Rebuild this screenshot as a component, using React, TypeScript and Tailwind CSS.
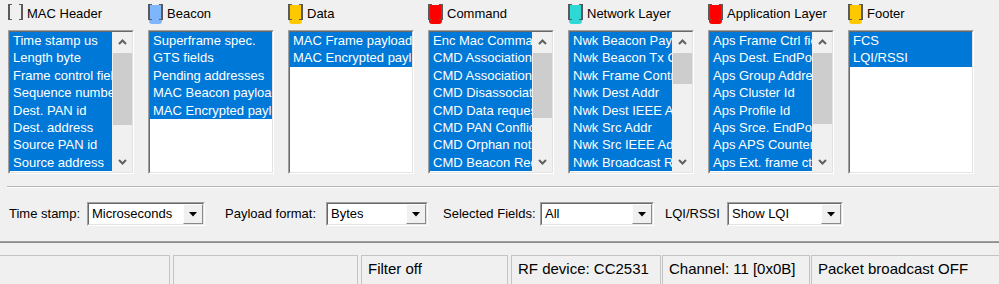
import React from 'react';

interface Group {
  name: string;
  swatch: string;
  items: string[];
  thumb?: string;
}

const groups: Group[] = [
  {
    name: 'MAC Header',
    swatch: '',
    items: ['Time stamp us', 'Length byte', 'Frame control field', 'Sequence number', 'Dest. PAN id', 'Dest. address', 'Source PAN id', 'Source address'],
    thumb: 'h-[72px]',
  },
  {
    name: 'Beacon',
    swatch: 'bg-[#7fb5fb]',
    items: ['Superframe spec.', 'GTS fields', 'Pending addresses', 'MAC Beacon payload', 'MAC Encrypted payload'],
  },
  {
    name: 'Data',
    swatch: 'bg-[#fdc800]',
    items: ['MAC Frame payload', 'MAC Encrypted payload'],
  },
  {
    name: 'Command',
    swatch: 'bg-[#ff0000]',
    items: ['Enc Mac Command', 'CMD Association request', 'CMD Association response', 'CMD Disassociation notification', 'CMD Data request', 'CMD PAN Conflict', 'CMD Orphan notification', 'CMD Beacon Request'],
    thumb: 'h-[65px]',
  },
  {
    name: 'Network Layer',
    swatch: 'bg-[#2ed8d4]',
    items: ['Nwk Beacon Payload', 'Nwk Beacon Tx Offset', 'Nwk Frame Control', 'Nwk Dest Addr', 'Nwk Dest IEEE Addr', 'Nwk Src Addr', 'Nwk Src IEEE Addr', 'Nwk Broadcast Radius'],
    thumb: 'h-[31px]',
  },
  {
    name: 'Application Layer',
    swatch: 'bg-[#ff0000]',
    items: ['Aps Frame Ctrl field', 'Aps Dest. EndPoint', 'Aps Group Address', 'Aps Cluster Id', 'Aps Profile Id', 'Aps Srce. EndPoint', 'Aps APS Counter', 'Aps Ext. frame ctrl'],
    thumb: 'h-[71px]',
  },
  {
    name: 'Footer',
    swatch: 'bg-[#fdc800]',
    items: ['FCS', 'LQI/RSSI'],
  },
];

function Swatch({ color }: { color: string }) {
  return (
    <div className="relative w-[15px] h-[20px] shrink-0">
      {color && <div className={`absolute left-[1px] top-[1px] w-[13px] h-[19px] rounded-b-[3px] ${color}`} />}
      <div className="absolute left-0 top-0 w-[4px] h-[16px] border-l-2 border-t border-b border-[#5a5a5a]" />
      <div className="absolute right-0 top-0 w-[4px] h-[16px] border-r-2 border-t border-b border-[#5a5a5a]" />
    </div>
  );
}

function Chevron({ down }: { down?: boolean }) {
  return (
    <svg width="9" height="6" viewBox="0 0 9 6">
      <path d={down ? 'M1 1 L4.5 4.5 L8 1' : 'M1 5 L4.5 1.5 L8 5'} fill="none" stroke="#606060" strokeWidth="2" />
    </svg>
  );
}

function ListBox({ group }: { group: Group }) {
  return (
    <div className="w-[126px]">
      <div className="flex items-start h-[20px] gap-[4px]">
        <Swatch color={group.swatch} />
        <span className="text-[13px] leading-[20px] text-black whitespace-nowrap">{group.name}</span>
      </div>
      <div className="mt-[6px] h-[144px] border border-t-[#a0a0a0] border-l-[#a0a0a0] border-r-white border-b-white">
        <div className="h-full border border-t-[#696969] border-l-[#696969] border-r-[#e3e3e3] border-b-[#e3e3e3] bg-white flex">
          <div className="flex-1 overflow-hidden">
            {group.items.map((it) => (
              <div key={it} className="h-[17.4px] leading-[17.4px] bg-[#0078d7] text-white text-[13px] px-[3px] whitespace-nowrap overflow-hidden">
                {it}
              </div>
            ))}
          </div>
          {group.thumb && (
            <div className="w-[20px] bg-[#f0f0f0] flex flex-col">
              <div className="h-[20px] flex items-center justify-center"><Chevron /></div>
              <div className={`mt-[1px] ml-[1px] bg-[#cdcdcd] ${group.thumb}`} />
              <div className="flex-1" />
              <div className="h-[20px] flex items-center justify-center"><Chevron down /></div>
            </div>
          )}
        </div>
      </div>
    </div>
  );
}

function Combo({ value, width }: { value: string; width: string }) {
  return (
    <div className={`h-[24px] border border-t-[#a0a0a0] border-l-[#a0a0a0] border-r-white border-b-white ${width}`}>
      <div className="h-full border border-t-[#696969] border-l-[#696969] border-r-[#e3e3e3] border-b-[#e3e3e3] bg-white flex">
        <span className="flex-1 pl-[3px] text-[13px] leading-[20px] text-black whitespace-nowrap overflow-hidden">{value}</span>
        <div className="w-[20px] h-full bg-[#f0f0f0] border border-t-[#fdfdfd] border-l-[#fdfdfd] border-r-[#8a8a8a] border-b-[#8a8a8a] flex items-center justify-center">
          <svg width="8" height="5" viewBox="0 0 8 5"><path d="M0 0 H8 L4 4.5 Z" fill="#000" /></svg>
        </div>
      </div>
    </div>
  );
}

export default function App() {
  return (
    <div className="w-[999px] h-[284px] bg-[#f0f0f0] overflow-hidden font-['Liberation_Sans',Arial,sans-serif]">
      <div className="flex gap-[14px] pl-[8px] pt-[4px]">
        {groups.map((g) => (
          <ListBox key={g.name} group={g} />
        ))}
      </div>

      <div className="ml-[7px] mt-[12px] h-[2px] border-t border-t-[#b4b4b4] border-b border-b-white" />

      <div className="mt-[14px] h-[24px] flex items-center text-[13px] text-black">
        <span className="ml-[9px] w-[78px]">Time stamp:</span>
        <Combo value="Microseconds" width="w-[118px]" />
        <span className="ml-[20px] w-[101px]">Payload format:</span>
        <Combo value="Bytes" width="w-[102px]" />
        <span className="ml-[15px] w-[97px]">Selected Fields:</span>
        <Combo value="All" width="w-[114px]" />
        <span className="ml-[11px] w-[62px]">LQI/RSSI</span>
        <Combo value="Show LQI" width="w-[116px]" />
      </div>

      <div className="mt-[15px] h-[2px] border-t border-t-[#a0a0a0] border-b border-b-[#8c8c8c]" />

      <div className="mt-[12px] flex h-[40px] text-[15px] leading-[20px] text-black">
        <div className="w-[170px] border-t border-r border-[#c4c4c4]" />
        <div className="ml-[3px] w-[185px] border-t border-l border-r border-[#c4c4c4]" />
        <div className="ml-[3px] w-[147px] border-t border-l border-r border-[#c4c4c4] pl-[6px] pt-[3px]">Filter off</div>
        <div className="ml-[3px] w-[150px] border-t border-l border-r border-[#c4c4c4] pl-[6px] pt-[3px]">RF device: CC2531</div>
        <div className="ml-[1px] w-[148px] border-t border-l border-r border-[#c4c4c4] pl-[6px] pt-[3px]">Channel: 11 [0x0B]</div>
        <div className="ml-[1px] flex-1 border-t border-l border-[#c4c4c4] pl-[6px] pt-[3px]">Packet broadcast OFF</div>
      </div>
    </div>
  );
}
